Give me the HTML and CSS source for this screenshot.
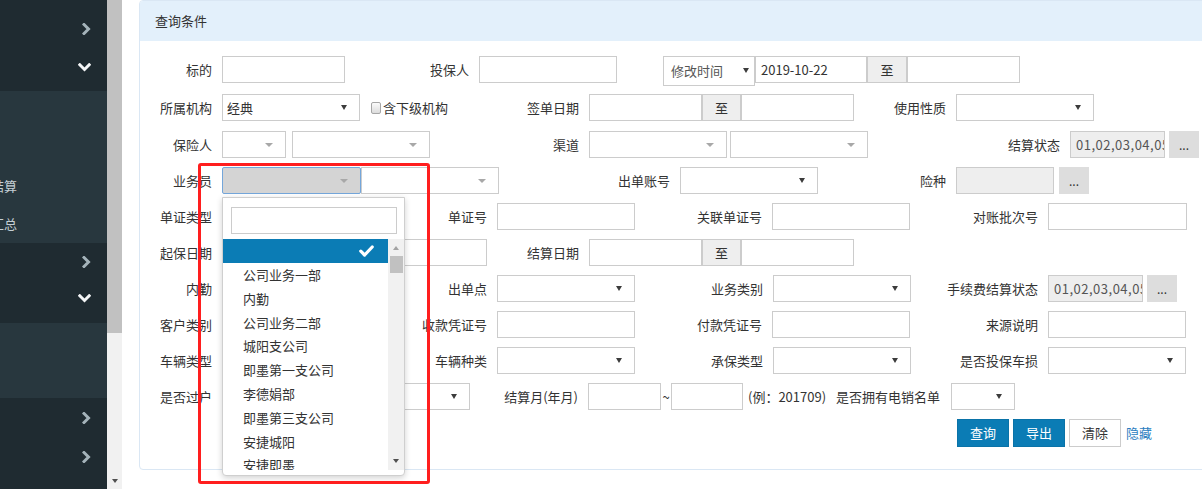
FILE: index.html
```html
<!DOCTYPE html>
<html lang="zh-CN">
<head>
<meta charset="utf-8">
<title>查询条件</title>
<link rel="stylesheet" href="styles.css">
</head>
<body>
<div class="app">
  <aside class="sidebar">
    <div class="sec dark sec-a">
      <div class="nav-item"><svg class="chev-r" width="9" height="12" viewBox="0 0 9 12"><polyline points="2,1.5 6.5,6 2,10.5"/></svg></div>
      <div class="nav-item"><svg class="chev-d" width="13" height="9" viewBox="0 0 13 9"><polyline points="1.8,1.8 6.5,6.5 11.2,1.8"/></svg></div>
    </div>
    <div class="sec light sub1">
      <div class="sub-item"></div>
      <div class="sub-item"></div>
      <div class="sub-item"><span>结算</span></div>
      <div class="sub-item"><span>汇总</span></div>
    </div>
    <div class="sec dark sec-b">
      <div class="nav-item"><svg class="chev-r" width="9" height="12" viewBox="0 0 9 12"><polyline points="2,1.5 6.5,6 2,10.5"/></svg></div>
      <div class="nav-item"><svg class="chev-d" width="13" height="9" viewBox="0 0 13 9"><polyline points="1.8,1.8 6.5,6.5 11.2,1.8"/></svg></div>
    </div>
    <div class="sec light sub2"></div>
    <div class="sec dark sec-c">
      <div class="nav-item"><svg class="chev-r" width="9" height="12" viewBox="0 0 9 12"><polyline points="2,1.5 6.5,6 2,10.5"/></svg></div>
      <div class="nav-item"><svg class="chev-r" width="9" height="12" viewBox="0 0 9 12"><polyline points="2,1.5 6.5,6 2,10.5"/></svg></div>
    </div>
  </aside>
  <div class="vscroll">
    <div class="vs-thumb"></div>
    <div class="vs-fill"></div>
    <div class="vs-down"></div>
  </div>
  <main class="main">
    <section class="panel">
      <div class="panel-hd">查询条件</div>
      <div class="form">
        <div class="row r1">
          <label class="lbl w82">标的</label><div class="inp f123"></div>
          <label class="lbl w134">投保人</label><div class="inp f138"></div>
          <div class="sel sel-time f92 ml46">修改时间</div>
          <div class="inp f112 date">2019-10-22</div><div class="addon f40">至</div><div class="inp f113"></div>
        </div>
        <div class="row r2">
          <label class="lbl w82">所属机构</label><div class="sel f138">经典</div>
          <label class="chk"><span class="box"></span>含下级机构</label>
          <label class="lbl w141">签单日期</label>
          <div class="inp f113"></div><div class="addon f39">至</div><div class="inp f113"></div>
          <label class="lbl w102">使用性质</label><div class="sel f138"></div>
        </div>
        <div class="row">
          <label class="lbl w82">保险人</label><div class="s2 f64"></div><div class="s2 f138 ml6"></div>
          <label class="lbl w159">渠道</label><div class="s2 f138"></div><div class="s2 f138 ml3"></div>
          <label class="lbl w202">结算状态</label><div class="inp ro f95">01,02,03,04,05</div><div class="btn-dots ml4">...</div>
        </div>
        <div class="row">
          <label class="lbl w82">业务员</label>
          <div class="s2 active f139">
            <div class="dd">
              <div class="dd-search"><div class="dd-input"></div></div>
              <div class="dd-body">
                <ul class="dd-list">
                  <li class="hl"><svg class="check" width="15" height="12" viewBox="0 0 15 12"><polyline points="1.8,6.2 5.6,10 13.2,2"/></svg></li>
                  <li>公司业务一部</li>
                  <li>内勤</li>
                  <li>公司业务二部</li>
                  <li>城阳支公司</li>
                  <li>即墨第一支公司</li>
                  <li>李德娟部</li>
                  <li>即墨第三支公司</li>
                  <li>安捷城阳</li>
                  <li>安捷即墨</li>
                </ul>
                <div class="dd-scroll">
                  <span class="ds-up"></span>
                  <span class="ds-thumb"></span>
                  <span class="ds-fill"></span>
                  <span class="ds-down"></span>
                </div>
              </div>
            </div>
            <div class="annot"></div>
          </div>
          <div class="s2 f138"></div>
          <label class="lbl w181">出单账号</label><div class="sel f138"></div>
          <label class="lbl w138">险种</label><div class="inp ro f98"></div><div class="btn-dots ml5">...</div>
        </div>
        <div class="row">
          <label class="lbl w82">单证类型</label><div class="inp f138"></div>
          <label class="lbl w137">单证号</label><div class="inp f138"></div>
          <label class="lbl w137">关联单证号</label><div class="inp f138"></div>
          <label class="lbl w138">对账批次号</label><div class="inp f139"></div>
        </div>
        <div class="row">
          <label class="lbl w82">起保日期</label>
          <div class="inp f113"></div><div class="addon f39">至</div><div class="inp f113"></div>
          <label class="lbl w102">结算日期</label>
          <div class="inp f113"></div><div class="addon f39">至</div><div class="inp f113"></div>
        </div>
        <div class="row">
          <label class="lbl w82">内勤</label><div class="sel f138"></div>
          <label class="lbl w137">出单点</label><div class="sel f138"></div>
          <label class="lbl w138">业务类别</label><div class="sel f138"></div>
          <label class="lbl w137">手续费结算状态</label><div class="inp ro f95">01,02,03,04,05</div><div class="btn-dots ml4">...</div>
        </div>
        <div class="row">
          <label class="lbl w82">客户类别</label><div class="inp f138"></div>
          <label class="lbl w137">收款凭证号</label><div class="inp f138"></div>
          <label class="lbl w137">付款凭证号</label><div class="inp f138"></div>
          <label class="lbl w138">来源说明</label><div class="inp f138"></div>
        </div>
        <div class="row">
          <label class="lbl w82">车辆类型</label><div class="sel f138"></div>
          <label class="lbl w137">车辆种类</label><div class="sel f138"></div>
          <label class="lbl w138">承保类型</label><div class="sel f138"></div>
          <label class="lbl w137">是否投保车损</label><div class="sel f138"></div>
        </div>
        <div class="row">
          <label class="lbl w82">是否过户</label><div class="sel f248"></div>
          <label class="lbl w118">结算月(年月)</label>
          <div class="inp f73"></div><span class="tilde">~</span><div class="inp f72"></div>
          <span class="txt ml5">(例：201709)</span>
          <span class="txt ml10">是否拥有电销名单</span>
          <div class="sel f64 ml11"></div>
        </div>
        <div class="row">
          <div class="btns">
            <button class="btn btn-primary" type="button">查询</button>
            <button class="btn btn-primary ml4" type="button">导出</button>
            <button class="btn btn-default ml4" type="button">清除</button>
            <a class="link" href="#">隐藏</a>
          </div>
        </div>
      </div>
    </section>
  </main>
</div>
</body>
</html>
```
FILE: styles.css
```css
* { box-sizing: border-box; }
html, body { margin: 0; padding: 0; }
body {
  font-family: "Noto Sans CJK SC", "Microsoft YaHei", sans-serif;
  font-size: 13px;
  color: #333;
  background: #fff;
}
.app { display: flex; width: 1202px; height: 489px; overflow: hidden; }

/* sidebar */
.sidebar { width: 107px; flex: none; display: flex; flex-direction: column; overflow: hidden; background: #1f2b31; }
.sec { flex: none; }
.dark { background: #1f2b31; }
.light { background: #28373e; }
.sec-a { height: 91px; padding-top: 9px; }
.nav-item { height: 39px; display: flex; align-items: center; justify-content: flex-end; padding-right: 16px; }
.sec-b { height: 80px; }
.sec-b .nav-item { height: 37px; }
.sec-c { flex: 1; }
.sub1 { height: 152px; }
.sub2 { height: 75px; }
.sub-item { height: 38px; line-height: 38px; color: #c5cfd4; white-space: nowrap; }
.sub-item span { display: inline-block; margin-left: -9px; }
.chev-r polyline { fill: none; stroke: #a4b3ba; stroke-width: 3; stroke-linecap: square; }
.chev-d polyline { fill: none; stroke: #f4f6f7; stroke-width: 3; stroke-linecap: square; }

/* window scrollbar */
.vscroll { width: 15px; flex: none; background: #f1f1f1; display: flex; flex-direction: column; }
.vs-thumb { height: 333px; background: #c1c1c1; }
.vs-fill { flex: 1; }
.vs-down { width: 0; height: 0; margin: 0 auto 6px; border-top: 4px solid #505050; border-left: 3.5px solid transparent; border-right: 3.5px solid transparent; }

/* main */
.main { flex: 1; min-width: 0; padding-left: 17px; overflow: hidden; }
.panel { width: 1100px; border: 1px solid #dae7f4; border-radius: 4px; }
.panel-hd { height: 40px; line-height: 40px; padding-left: 15px; background: #e3f0fb; border-radius: 3px 3px 0 0; color: #333; }
.form { padding: 15px 0 14px; }
.row { display: flex; align-items: flex-start; height: 36px; white-space: nowrap; }
.r1 { height: 38px; }
.r2 { height: 37px; }

.lbl { flex: none; text-align: right; padding-right: 10px; line-height: 27px; white-space: nowrap; }
.w82 { width: 82px; } .w102 { width: 102px; } .w118 { width: 118px; }
.w134 { width: 134px; } .w137 { width: 137px; } .w138 { width: 138px; }
.w141 { width: 141px; } .w159 { width: 159px; } .w181 { width: 181px; }
.w202 { width: 202px; }

.f39 { width: 39px; } .f40 { width: 40px; } .f64 { width: 64px; }
.f72 { width: 72px; } .f73 { width: 73px; } .f92 { width: 92px; }
.f95 { width: 95px; } .f98 { width: 98px; } .f112 { width: 112px; }
.f113 { width: 113px; } .f123 { width: 123px; } .f138 { width: 138px; }
.f139 { width: 139px; } .f248 { width: 248px; }

.ml3 { margin-left: 3px; } .ml4 { margin-left: 4px; } .ml5 { margin-left: 5px; }
.ml6 { margin-left: 6px; } .ml10 { margin-left: 10px; } .ml11 { margin-left: 11px; }
.ml46 { margin-left: 46px; }

.inp { flex: none; height: 27px; border: 1px solid #ccc; background: #fff; padding: 0 5px; line-height: 25px; overflow: hidden; color: #333; }
.date { color: #333; }
.ro { background: #eee; color: #555; letter-spacing: 0.5px; }
.addon { flex: none; height: 27px; border: 1px solid #ccc; background: #eee; text-align: center; line-height: 25px; color: #333; }

.sel { flex: none; position: relative; height: 27px; border: 1px solid #ccc; background: #fff; padding: 0 4px; line-height: 25px; color: #333; }
.sel::after { content: ""; position: absolute; right: 12px; top: 10px; border-top: 5px solid #3c3c3c; border-left: 3.5px solid transparent; border-right: 3.5px solid transparent; }
.sel-time { height: 30px; line-height: 28px; padding-left: 7px; color: #555; z-index: 1; }
.sel-time::after { right: 5px; top: 11px; }

.s2 { flex: none; position: relative; height: 27px; border: 1px solid #ccc; background: #fff; }
.s2::after { content: ""; position: absolute; right: 12px; top: 11px; border-top: 4px solid #a8a8a8; border-left: 4px solid transparent; border-right: 4px solid transparent; }
.s2.active { background: #d4d4d4; border-color: #74a6da; border-radius: 2px; }

.chk { flex: none; width: 88px; height: 27px; padding-left: 11px; display: flex; align-items: center; }
.box { width: 12px; height: 12px; border: 1px solid #a6a6a6; border-radius: 2px; background: linear-gradient(#fbfbfb, #dcdcdc); margin-right: 2px; }

.btn-dots { flex: none; width: 30px; height: 27px; background: #ddd; text-align: center; line-height: 27px; font-size: 12px; color: #333; }

.tilde { flex: none; width: 10px; text-align: center; line-height: 27px; }
.txt { flex: none; line-height: 27px; }

.btns { display: flex; align-items: center; margin-left: 817px; }
.btn { width: 52px; height: 28px; padding: 0; border: 1px solid; font-family: inherit; font-size: 13px; line-height: 26px; text-align: center; cursor: pointer; }
.btn-primary { background: #0b7cb5; border-color: #0a73a8; color: #fff; }
.btn-default { background: #fff; border-color: #ccc; color: #333; }
.link { margin-left: 5px; color: #2a7dbf; text-decoration: none; line-height: 28px; }

/* open dropdown */
.dd { position: absolute; left: -1px; top: 29px; width: 183px; height: 279px; background: #fff; border: 1px solid #cfcfcf; border-radius: 0 0 4px 4px; box-shadow: 0 2px 6px rgba(0, 0, 0, 0.18); z-index: 5; overflow: hidden; }
.dd-search { padding: 9px 7px 5px 8px; }
.dd-input { height: 27px; border: 1px solid #ccc; background: #fff; }
.dd-body { display: flex; height: 231px; overflow: hidden; }
.dd-list { list-style: none; margin: 0; padding: 0; width: 165px; flex: none; }
.dd-list li { height: 23.8px; line-height: 23.8px; padding-left: 20px; color: #333; white-space: nowrap; }
.dd-list li.hl { height: 24px; background: #0b7cb5; display: flex; align-items: center; justify-content: flex-end; padding-right: 14px; }
.check polyline { fill: none; stroke: #fff; stroke-width: 3.2; stroke-linecap: round; stroke-linejoin: round; }
.dd-scroll { flex: 1; background: #f1f1f1; display: flex; flex-direction: column; align-items: center; }
.ds-up { width: 0; height: 0; margin-top: 7px; border-bottom: 4px solid #a3a3a3; border-left: 3.5px solid transparent; border-right: 3.5px solid transparent; }
.ds-thumb { width: 13px; height: 17px; margin-top: 6px; background: #c1c1c1; }
.ds-fill { flex: 1; }
.ds-down { width: 0; height: 0; margin-bottom: 7px; border-top: 4px solid #505050; border-left: 3.5px solid transparent; border-right: 3.5px solid transparent; }

.annot { position: absolute; left: -25px; top: -5px; width: 232px; height: 321px; border: 3px solid #ff1e1e; border-radius: 3px; z-index: 6; pointer-events: none; }
```
